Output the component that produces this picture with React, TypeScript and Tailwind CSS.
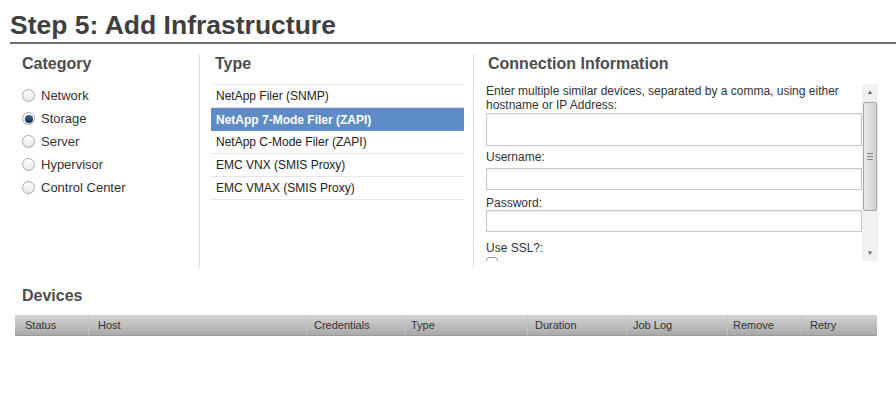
const categories = ["Network", "Storage", "Server", "Hypervisor", "Control Center"];
const types = [
  "NetApp Filer (SNMP)",
  "NetApp 7-Mode Filer (ZAPI)",
  "NetApp C-Mode Filer (ZAPI)",
  "EMC VNX (SMIS Proxy)",
  "EMC VMAX (SMIS Proxy)",
];
const cols = [
  { label: "Status", w: "w-[73px]", pl: "pl-[10px]" },
  { label: "Host", w: "w-[218px]", pl: "pl-[9px]" },
  { label: "Credentials", w: "w-[99px]", pl: "pl-[7px]" },
  { label: "Type", w: "w-[122px]", pl: "pl-[5px]" },
  { label: "Duration", w: "w-[99px]", pl: "pl-[7px]" },
  { label: "Job Log", w: "w-[101px]", pl: "pl-[6px]" },
  { label: "Remove", w: "w-[74px]", pl: "pl-[5px]" },
  { label: "Retry", w: "w-[76px]", pl: "pl-[8px]" },
];

function Radio({ checked }: { checked: boolean }) {
  return (
    <span className="w-[13px] h-[13px] rounded-full border border-[#a9a9a9] bg-gradient-to-b from-[#ffffff] to-[#e6e6e6] flex items-center justify-center shrink-0">
      {checked && <span className="w-[8px] h-[8px] rounded-full bg-gradient-to-b from-[#3c6a9c] to-[#0f2d52]" />}
    </span>
  );
}

function Field({ label, pad }: { label: string; pad: string }) {
  return (
    <div>
      <div className={`text-[12px] leading-[14px] text-[#333] ${pad}`}>{label}</div>
      <div className="h-[22px] border border-[#c8c8c8] bg-white shadow-[inset_0_1px_2px_rgba(0,0,0,0.08)]" />
    </div>
  );
}

export default function App() {
  return (
    <div className="w-[896px] h-[401px] bg-white overflow-hidden text-[#333]" style={{ fontFamily: '"Liberation Sans", Arial, sans-serif' }}>
      <div className="pl-[10px] pt-[9px]">
        <h1 className="text-[26.5px] leading-[32px] font-bold text-[#3f3f3f]">Step 5: Add Infrastructure</h1>
        <div className="mt-[1px] h-[2px] bg-[#6e6e6e]" />
      </div>

      <div className="flex pl-[22px] mt-[10px]">
        <div className="w-[178px] border-r border-[#dedede] h-[214px]">
          <div className="text-[16px] leading-[20px] font-bold text-[#4d4d4d]">Category</div>
          <div className="mt-[10px] flex flex-col">
            {categories.map((c, i) => (
              <div key={c} className="h-[23px] flex items-center gap-[6px] text-[13px]">
                <Radio checked={i === 1} />
                <span>{c}</span>
              </div>
            ))}
          </div>
        </div>

        <div className="w-[274px] pl-[11px] pr-[9px] border-r border-[#dedede] h-[214px]">
          <div className="pl-[4px] text-[16px] leading-[20px] font-bold text-[#4d4d4d]">Type</div>
          <div className="mt-[10px] border-t border-[#ececec]">
            {types.map((t, i) => (
              <div
                key={t}
                className={
                  i === 1
                    ? "h-[23px] flex items-center pl-[5px] text-[12px] font-bold text-white bg-[#5d8cc6]"
                    : "h-[23px] flex items-center pl-[5px] text-[12px] text-[#222] border-b border-[#e6e6e6]"
                }
              >
                {t}
              </div>
            ))}
          </div>
        </div>

        <div className="w-[404px] pl-[12px]">
          <div className="pl-[2px] text-[16px] leading-[20px] font-bold text-[#4d4d4d]">Connection Information</div>
          <div className="mt-[10px] flex h-[177px]">
            <div className="w-[376px] overflow-hidden">
              <div className="text-[12px] leading-[14px] text-[#333] pr-[8px]">
                Enter multiple similar devices, separated by a comma, using either hostname or IP Address:
              </div>
              <div className="mt-[1px] h-[33px] border border-[#c8c8c8] bg-white shadow-[inset_0_1px_2px_rgba(0,0,0,0.08)]" />
              <Field label="Username:" pad="pt-[4px] pb-[4px]" />
              <Field label="Password:" pad="pt-[6px] pb-0" />
              <div className="text-[12px] leading-[14px] text-[#333] pt-[9px]">Use SSL?:</div>
              <div className="mt-[2px] w-[12px] h-[12px] border border-[#9a9a9a] rounded-[3px]" />
            </div>
            <div className="w-[16px] bg-[#f1f1f1] flex flex-col items-center">
              <div className="h-[16px] flex items-center justify-center text-[6px] text-[#555]">▲</div>
              <div className="w-[14px] h-[109px] mt-[2px] border border-[#a6a6a6] rounded-[2px] bg-gradient-to-r from-[#e9e9e9] to-[#d2d2d2] flex flex-col items-center justify-center gap-[2px]">
                <div className="w-[6px] h-px bg-[#888]" />
                <div className="w-[6px] h-px bg-[#888]" />
                <div className="w-[6px] h-px bg-[#888]" />
              </div>
              <div className="flex-1" />
              <div className="h-[16px] flex items-center justify-center text-[6px] text-[#555]">▼</div>
            </div>
          </div>
        </div>
      </div>

      <div className="pl-[22px] mt-[18px] text-[16px] leading-[20px] font-bold text-[#4d4d4d]">Devices</div>
      <div className="ml-[15px] mt-[9px] w-[862px] h-[21px] flex bg-gradient-to-b from-[#d4d4d4] to-[#a9a9a9] border-b border-[#9a9a9a]">
        {cols.map((c, i) => (
          <div
            key={c.label}
            className={`${c.w} ${c.pl} flex items-center text-[11px] text-[#333] ${i > 0 ? "border-l border-[#c4c4c4]" : ""}`}
          >
            {c.label}
          </div>
        ))}
      </div>
    </div>
  );
}
